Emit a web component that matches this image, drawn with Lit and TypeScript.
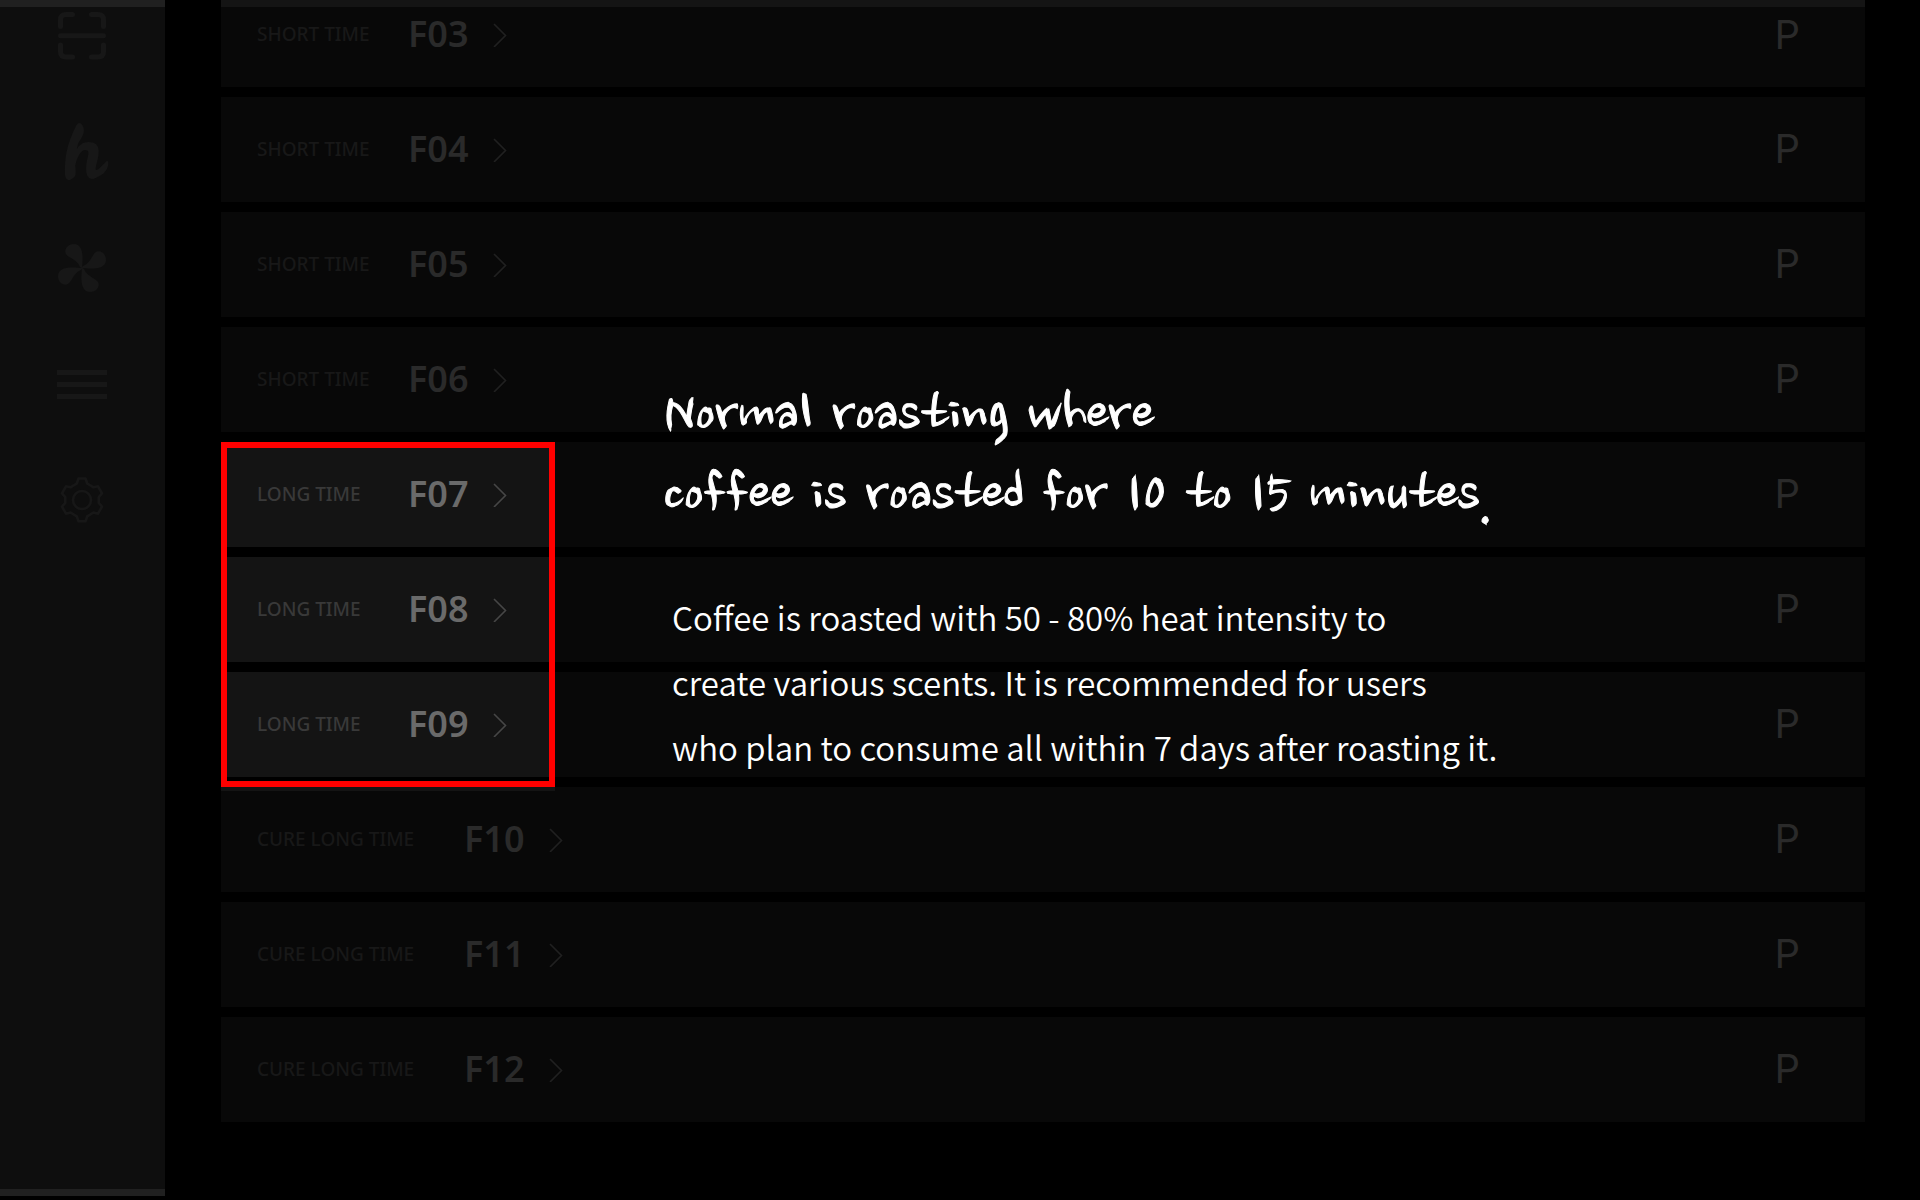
import { LitElement, html, css, svg } from "lit";
import { customElement, property } from "lit/decorators.js";
import { classMap } from "lit/directives/class-map.js";

interface Program {
  label: string;
  code: string;
}

const shortPrograms: Program[] = ["F03", "F04", "F05", "F06"].map((code) => ({ label: "SHORT TIME", code }));
const longPrograms: Program[] = ["F07", "F08", "F09"].map((code) => ({ label: "LONG TIME", code }));
const curePrograms: Program[] = ["F10", "F11", "F12"].map((code) => ({ label: "CURE LONG TIME", code }));

const scanIcon = html`<svg viewBox="0 0 56 56" fill="none" stroke="currentColor" stroke-width="5" stroke-linecap="round">
  <path d="M6.5 18.500V12Q6.500 6.500 12 6.500H18.500M37.500 6.500H44Q49.500 6.500 49.500 12V18.500M6.500 37V43.500Q6.500 49 12 49H18.500M37.500 49H44Q49.500 49 49.500 43.500V37M6.500 27.700H49.500" />
</svg>`;

const fanIcon = html`<svg viewBox="0 0 56 56" fill="currentColor">
  ${[0, 90, 180, 270].map(
    (angle) => svg`<path transform="rotate(${angle} 28 28)" d="M28 29C28.500 22 31 4 20 4C15 4 11 7.500 11.300 12C12 18 22.500 18 26 27Z" />`,
  )}
</svg>`;

const menuIcon = html`<svg viewBox="0 0 56 56" fill="currentColor">
  <path d="M3 14H53V19H3ZM3 26H53V31H3ZM3 38H53V43H3Z" />
</svg>`;

const gearIcon = html`<svg viewBox="0 0 56 56" fill="none" stroke="currentColor" stroke-width="2.600" stroke-linejoin="round">
  <path d="M24.500 6.500H31.500L33.200 11.500L39.500 15.300L44 14.300L48 21.300L44.800 25V31L48 34.700L44 41.700L39.500 40.500L33.200 44.300L31.500 49.300H24.500L22.800 44.300L16.500 40.500L12 41.700L8 34.700L11.200 31V25L8 21.300L12 14.300L16.500 15.300L22.800 11.500Z" />
  <circle cx="28" cy="28" r="9" />
</svg>`;

@customElement("side-nav")
export class SideNav extends LitElement {
  static styles = css`
    :host {
      display: block;
      box-sizing: border-box;
      flex: 0 0 165px;
      border-top: 7px solid #202020;
      border-bottom: 7px solid #202020;
      background: #0e0e0e;
    }
    nav {
      display: flex;
      flex-direction: column;
      align-items: center;
      gap: 60px;
      padding: 1px 1px 0 0;
    }
    button {
      display: flex;
      align-items: center;
      justify-content: center;
      width: 56px;
      height: 56px;
      padding: 0;
      border: 0;
      background: none;
      color: #171717;
      cursor: pointer;
    }
    svg {
      display: block;
      width: 56px;
      height: 56px;
    }
    .brand {
      font: 400 74px/56px "Leckerli One", Lobster, "Liberation Serif", serif;
    }
  `;

  render() {
    return html`<nav>
      <button aria-label="Scan">${scanIcon}</button>
      <button class="brand">h</button>
      <button aria-label="Fan">${fanIcon}</button>
      <button aria-label="Menu">${menuIcon}</button>
      <button aria-label="Settings">${gearIcon}</button>
    </nav>`;
  }
}

@customElement("program-row")
export class ProgramRow extends LitElement {
  @property({ attribute: false }) program: Program = { label: "", code: "" };
  @property({ type: Boolean }) lit = false;
  @property({ type: Boolean }) wide = false;

  static styles = css`
    :host {
      display: flex;
      align-items: stretch;
      justify-content: space-between;
      box-sizing: border-box;
      height: 105px;
      background: #080808;
      font-family: "Noto Sans", "Noto Sans CJK KR", sans-serif;
    }
    button {
      padding: 0;
      border: 0;
      background: none;
      font-family: inherit;
      cursor: pointer;
    }
    .open {
      display: flex;
      align-items: center;
      min-width: 334px;
      padding-left: 36px;
      color: #2a2a2a;
      text-align: left;
    }
    .label {
      width: 151px;
      padding-bottom: 2px;
      color: #181818;
      font-size: 19px;
      font-weight: 500;
      line-height: 28px;
    }
    .wide .label {
      width: 207px;
    }
    .code {
      width: 85px;
      padding-bottom: 2px;
      font-size: 36px;
      font-weight: 600;
      line-height: 48px;
    }
    .chevron {
      width: 16px;
      height: 24px;
      color: #202020;
    }
    .lit {
      background: #141414;
      color: #6a6a6a;
    }
    .lit .label {
      color: #393939;
    }
    .lit .chevron {
      color: #464646;
    }
    .preset {
      padding: 0 65px 2px 24px;
      color: #2a2a2a;
      font: 400 40px/56px Inter, "Noto Sans", sans-serif;
    }
  `;

  render() {
    return html`
      <button class=${classMap({ open: true, lit: this.lit, wide: this.wide })}>
        <span class="label">${this.program.label}</span>
        <span class="code">${this.program.code}</span>
        <svg class="chevron" viewBox="0 0 16 24" fill="none" stroke="currentColor" stroke-width="1.600">
          <path d="M1 1L12.500 12.500L1 24" />
        </svg>
      </button>
      <button class="preset">P</button>
    `;
  }
}

@customElement("app-root")
export class AppRoot extends LitElement {
  static styles = css`
    :host {
      display: block;
      background: #000;
      color: #fff;
    }
    .page {
      display: flex;
      box-sizing: border-box;
      min-height: 100vh;
      padding-bottom: 4px;
    }
    main {
      display: flex;
      flex: 1;
      flex-direction: column;
      gap: 10px;
      padding: 0 55px 0 56px;
    }
    .first {
      height: 87px;
      padding-bottom: 25px;
      border-top: 7px solid #141414;
    }
    .featured {
      position: relative;
      display: flex;
      flex-direction: column;
      gap: 10px;
    }
    .frame {
      position: absolute;
      inset: 0 auto -10px 0;
      box-sizing: border-box;
      width: 334px;
      border: 6px solid #f00;
      box-shadow: 0 4px #141414;
      pointer-events: none;
    }
    .note {
      position: absolute;
      top: -65px;
      left: 443px;
      white-space: nowrap;
    }
    h1 {
      margin: 0;
      font: 400 66px/80px "Nanum Brush Script", Gaegu, "Noto Sans CJK KR", cursive;
      -webkit-text-stroke: 1px #fff;
    }
    p {
      margin: 48px 0 0;
      padding-left: 8px;
      font: 350 33px/65px "Noto Sans CJK KR", "Noto Sans", sans-serif;
    }
  `;

  render() {
    return html`<div class="page">
      <side-nav></side-nav>
      <main>
        ${shortPrograms.map(
          (program, i) => html`<program-row class=${classMap({ first: i === 0 })} .program=${program}></program-row>`,
        )}
        <section class="featured">
          ${longPrograms.map((program) => html`<program-row .program=${program} lit></program-row>`)}
          <div class="frame"></div>
          <div class="note">
            <h1>Normal roasting where<br />coffee is roasted for 10 to 15 minutes.</h1>
            <p>
              Coffee is roasted with 50 - 80% heat intensity to<br />create various scents. It is recommended for users<br />who
              plan to consume all within 7 days after roasting it.
            </p>
          </div>
        </section>
        ${curePrograms.map((program) => html`<program-row .program=${program} wide></program-row>`)}
      </main>
    </div>`;
  }
}
